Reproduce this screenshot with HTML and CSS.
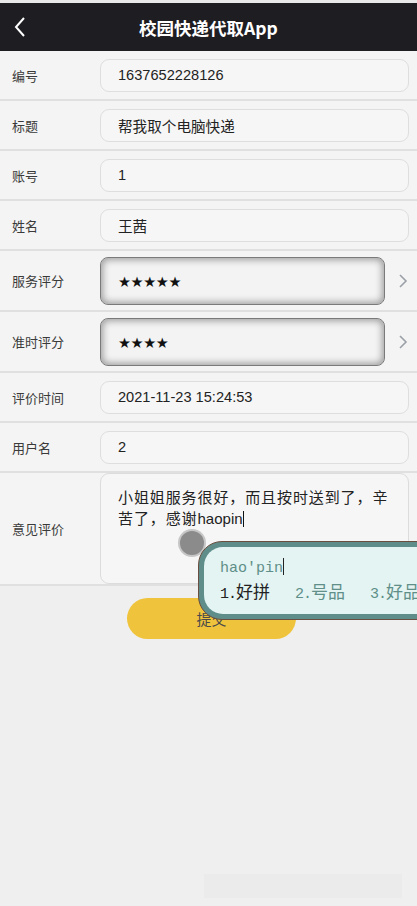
FILE: index.html
```html
<!DOCTYPE html>
<html lang="zh-CN">
<head>
<meta charset="utf-8">
<title>校园快递代取App</title>
<link rel="stylesheet" href="styles.css">
</head>
<body>
<div class="page">
  <header class="topbar">
    <svg class="back" width="14" height="22" viewBox="0 0 14 22"><path d="M11 2 L3 11 L11 20" fill="none" stroke="#fff" stroke-width="2"/></svg>
    <h1 class="title">校园快递代取App</h1>
  </header>
  <div class="form">
    <div class="row"><span class="label">编号</span><div class="field">1637652228126</div></div>
    <div class="row"><span class="label">标题</span><div class="field">帮我取个电脑快递</div></div>
    <div class="row"><span class="label">账号</span><div class="field">1</div></div>
    <div class="row"><span class="label">姓名</span><div class="field">王茜</div></div>
    <div class="row row-rate"><span class="label">服务评分</span><div class="field field-rate">★★★★★</div>
      <svg class="chev" width="10" height="16" viewBox="0 0 10 16"><path d="M2 2 L8 8 L2 14" fill="none" stroke="#9aa0a6" stroke-width="1.6"/></svg></div>
    <div class="row row-rate"><span class="label">准时评分</span><div class="field field-rate">★★★★</div>
      <svg class="chev" width="10" height="16" viewBox="0 0 10 16"><path d="M2 2 L8 8 L2 14" fill="none" stroke="#9aa0a6" stroke-width="1.6"/></svg></div>
    <div class="row"><span class="label">评价时间</span><div class="field">2021-11-23 15:24:53</div></div>
    <div class="row"><span class="label">用户名</span><div class="field">2</div></div>
    <div class="row row-area"><span class="label">意见评价</span><div class="area"><span class="line">小姐姐服务很好，而且按时送到了，辛</span><span class="line">苦了，感谢<span class="latin">haopin</span><span class="caret"></span></span></div></div>
  </div>
  <div class="actions"><button class="submit">提交</button></div>
  <div class="touch"></div>
  <div class="ime">
    <div class="ime-inner">
      <div class="pinyin">hao'pin<span class="ime-caret"></span></div>
      <div class="cands"><span class="cand first"><span class="num">1.</span>好拼</span><span class="cand"><span class="num">2.</span>号品</span><span class="cand"><span class="num">3.</span>好品</span></div>
    </div>
  </div>
  <div class="watermark"></div>
</div>
</body>
</html>
```
FILE: styles.css
```css
html, body { margin: 0; padding: 0; }
body {
  background: #efefef;
  font-family: "Noto Sans CJK SC", "Liberation Sans", sans-serif;
  color: #222;
  overflow: hidden;
}
.page { position: relative; width: 417px; height: 906px; overflow: hidden; border-top: 3px solid #e9e9e9; box-sizing: border-box; }
.topbar {
  height: 48px;
  background: #1e1d22;
  display: flex;
  align-items: center;
  justify-content: center;
  position: relative;
}
.back { position: absolute; left: 13px; top: 13px; }
.title { margin: 0; color: #fff; font-size: 17.5px; font-weight: 700; letter-spacing: 0; }
.form { background: #f4f4f4; }
.row {
  display: flex;
  align-items: center;
  height: 48px;
  border-bottom: 2px solid #e0e0e0;
}
.label { width: 88px; padding-left: 12px; font-size: 13px; color: #3a3a3a; flex: none; }
.field {
  flex: none;
  width: 290px;
  height: 31px;
  border: 1px solid #dedede;
  border-radius: 9px;
  background: #f6f6f6;
  padding-left: 17px;
  display: flex;
  align-items: center;
  font-family: "Liberation Sans", "Noto Sans CJK SC", sans-serif;
  font-size: 14.6px;
  color: #222;
}
.row-rate { height: 59px; }
.field-rate {
  width: 266px;
  border: 1px solid #7a7a7a;
  border-radius: 8px;
  background: #f3f3f3;
  box-shadow: inset 0 0 7px 2px rgba(0,0,0,0.35);
  font-family: "DejaVu Sans", sans-serif;
  font-size: 14.5px;
  letter-spacing: -0.4px;
  color: #111;
  padding-top: 3px;
  box-sizing: content-box;
  height: 43px;
}
.chev { margin-left: 13px; }
.row-area { height: 111px; border-top: 1px solid #e0e0e0; margin-top: -1px; }
.area {
  align-self: stretch;
  width: 290px;
  border: 1px solid #dcdcdc;
  border-radius: 9px;
  background: #f6f6f6;
  padding: 12px 0 0 17px;
  font-size: 15px;
  letter-spacing: 0.9px;
  line-height: 21px;
  color: #222;
  box-sizing: content-box;
  height: 97px;
}
.line { display: block; white-space: nowrap; }
.latin { font-family: "Liberation Sans", sans-serif; letter-spacing: 0; }
.caret { display: inline-block; width: 1px; height: 16px; background: #111; vertical-align: -3px; }
.actions { display: flex; padding: 12px 0 0 127px; }
.submit {
  width: 169px;
  height: 41px;
  border: none;
  border-radius: 21px;
  background: #f0c33c;
  color: #4a4a4a;
  font-family: "Noto Sans CJK SC", sans-serif;
  font-size: 15px;
  padding: 0;
}
.touch {
  position: absolute;
  left: 180px; top: 528px;
  width: 24px; height: 24px;
  border-radius: 50%;
  background: #8b8b8b;
  box-shadow: 0 0 0 2px #c6c6c6;
}
.ime {
  position: absolute;
  left: 198px; top: 538px;
  width: 260px; height: 79px;
  border-radius: 24px;
  border: 1.5px solid #6a4e3f;
  background: #5f8e8a;
  padding: 5px;
  box-sizing: border-box;
}
.ime-inner {
  height: 100%;
  border-radius: 19px;
  background: #e3f4f3;
  padding: 11px 0 0 16px;
  box-sizing: border-box;
}
.pinyin { font-size: 15px; color: #5f8f88; line-height: 20px; height: 21px; font-family: "Liberation Mono", monospace; }
.ime-caret { display: inline-block; width: 1px; height: 17px; background: #222; vertical-align: -3px; }
.cands { display: flex; gap: 25px; font-size: 17px; line-height: 23px; white-space: nowrap; font-family: "Noto Sans CJK SC", sans-serif; }
.num { font-family: "Liberation Mono", monospace; font-size: 15px; letter-spacing: -1px; }
.cand { color: #5f8f88; }
.cand.first { color: #222; }
.watermark {
  position: absolute;
  left: 204px; top: 871px;
  width: 198px; height: 24px;
  background: #ebebeb;
}
```
